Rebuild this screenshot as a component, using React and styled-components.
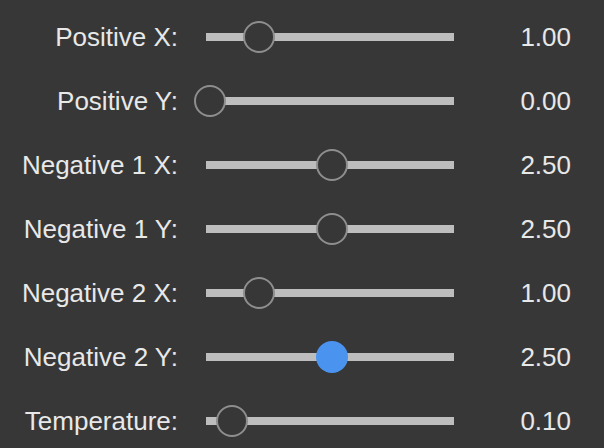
import styled, { createGlobalStyle } from "styled-components";

const GlobalStyle = createGlobalStyle`
  html, body {
    margin: 0;
    padding: 0;
    background: #373737;
  }
  body {
    font-family: "Liberation Sans", Arial, sans-serif;
  }
`;

const params = [
  { label: "Positive X:", value: 1.0, min: 0, max: 5 },
  { label: "Positive Y:", value: 0.0, min: 0, max: 5 },
  { label: "Negative 1 X:", value: 2.5, min: 0, max: 5 },
  { label: "Negative 1 Y:", value: 2.5, min: 0, max: 5 },
  { label: "Negative 2 X:", value: 1.0, min: 0, max: 5 },
  { label: "Negative 2 Y:", value: 2.5, min: 0, max: 5, active: true },
  { label: "Temperature:", value: 0.1, min: 0, max: 1.1 },
];

// thumb centre runs from 4px to 247px along the track
const Slider = ({ value, min, max, active }) => {
  const frac = (value - min) / (max - min);
  return (
    <Track>
      <Thumb $active={active} style={{ left: `${4 + frac * 243 - 16}px` }} />
    </Track>
  );
};

const App = () => {
  return (
    <>
      <GlobalStyle />
      <Panel>
        {params.map((p) => (
          <Row key={p.label}>
            <Label>{p.label}</Label>
            <Slider value={p.value} min={p.min} max={p.max} active={p.active} />
            <Label>{p.value.toFixed(2)}</Label>
          </Row>
        ))}
      </Panel>
    </>
  );
};

const Panel = styled.div`
  width: 604px;
  height: 448px;
  padding-top: 5px;
  box-sizing: border-box;
  background: #373737;
  overflow: hidden;
`;

const Row = styled.div`
  display: grid;
  grid-template-columns: 178px 248px 89px;
  column-gap: 28px;
  height: 64px;
  align-items: center;
`;

const Label = styled.div`
  text-align: right;
  white-space: nowrap;
  color: #e8e8e8;
  font-size: 26px;
  line-height: 30px;
`;

const Track = styled.div`
  position: relative;
  width: 248px;
  height: 8px;
  background: #bdbdbd;
`;

const Thumb = styled.div`
  position: absolute;
  top: 50%;
  width: 32px;
  height: 32px;
  margin-top: -16px;
  box-sizing: border-box;
  border-radius: 50%;
  background: ${(p) => (p.$active ? "#4a94ef" : "#373737")};
  border: ${(p) => (p.$active ? "none" : "2px solid #8e8e8e")};
`;

export default App;
